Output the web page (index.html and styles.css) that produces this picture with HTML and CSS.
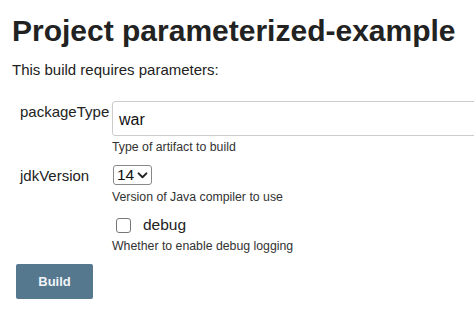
FILE: index.html
```html
<!DOCTYPE html>
<html lang="en">

<head>
  <meta charset="UTF-8">
  <meta name="viewport" content="width=device-width, initial-scale=1.0">
  <title>Project parameterized-example</title>
  <link rel="stylesheet" href="styles.css">
</head>

<body>
  <div class="page">
    <h1 class="title">Project parameterized-example</h1>
    <p class="intro">This build requires parameters:</p>

    <form class="params">
      <div class="param">
        <label class="param-name" for="packageType">packageType</label>
        <div class="param-body">
          <input type="text" id="packageType" class="text-input" value="war">
          <div class="param-desc">Type of artifact to build</div>
        </div>
      </div>

      <div class="param">
        <label class="param-name" for="jdkVersion">jdkVersion</label>
        <div class="param-body">
          <span class="select-wrap">
            <select id="jdkVersion" class="select">
              <option>8</option>
              <option>11</option>
              <option selected>14</option>
            </select>
            <svg class="select-arrow" viewBox="0 0 12 8" width="11" height="7">
              <path d="M1.5 1.5 L6 6 L10.5 1.5" fill="none" stroke="#222" stroke-width="2.2" stroke-linecap="round" stroke-linejoin="round" />
            </svg>
          </span>
          <div class="param-desc">Version of Java compiler to use</div>
        </div>
      </div>

      <div class="param">
        <span class="param-name"></span>
        <div class="param-body">
          <label class="check">
            <input type="checkbox" class="checkbox">
            <span>debug</span>
          </label>
          <div class="param-desc">Whether to enable debug logging</div>
        </div>
      </div>

      <button type="submit" class="build-button">Build</button>
    </form>
  </div>
</body>

</html>
```

FILE: styles.css
```css
* {
  margin: 0;
  padding: 0;
  box-sizing: border-box;
  font-family: 'Liberation Sans', Arial, sans-serif;
}

html,
body {
  height: 100%;
  overflow: hidden;
}

body {
  background-color: #fff;
  color: #333;
}

.page {
  padding: 13px 0 0 12px;
}

.title {
  font-size: 30px;
  line-height: 36px;
  font-weight: bold;
  color: #222;
  white-space: nowrap;
}

.intro {
  font-size: 15px;
  line-height: 20px;
  margin-top: 11px;
  color: #222;
}

.params {
  margin-top: 21px;
  display: flex;
  flex-direction: column;
  gap: 10px;
}

.param {
  display: grid;
  grid-template-columns: 100px 1fr;
  padding-left: 8px;
  margin-left: -8px;
}

.param-name {
  font-size: 15px;
  line-height: 20px;
  padding: 1px 0 0 8px;
  color: #222;
}

.param-body {
  display: flex;
  flex-direction: column;
  align-items: flex-start;
  gap: 3px;
}

.text-input {
  width: 380px;
  height: 35px;
  border: 1px solid #ccc;
  border-radius: 3px;
  padding: 2px 6px 0;
  font-size: 16px;
  color: #111;
  background: #fff;
}

.param-desc {
  font-size: 12.3px;
  line-height: 16px;
  color: #333;
}

.select-wrap {
  position: relative;
  display: inline-block;
  margin: 0 0 1px 1px;
}

.select {
  appearance: none;
  -webkit-appearance: none;
  width: 39px;
  height: 20px;
  border: 1px solid #888;
  border-radius: 3px;
  background: #fff;
  font-size: 15.5px;
  line-height: 18px;
  padding: 0 0 0 3px;
  color: #111;
}

.select-arrow {
  position: absolute;
  right: 4px;
  top: 7px;
  pointer-events: none;
}

.check {
  display: flex;
  align-items: center;
  gap: 12px;
  height: 20px;
  padding-left: 4px;
  font-size: 15.5px;
  color: #222;
}

.checkbox {
  appearance: none;
  -webkit-appearance: none;
  width: 15px;
  height: 15px;
  border: 1.5px solid #777;
  border-radius: 3px;
  background: #fff;
}

.build-button {
  align-self: flex-start;
  margin-left: 4px;
  width: 77px;
  height: 35px;
  border: none;
  border-radius: 2px;
  background: #55788f;
  color: #f0f4f7;
  font-size: 13px;
  font-weight: bold;
  cursor: pointer;
}
```
